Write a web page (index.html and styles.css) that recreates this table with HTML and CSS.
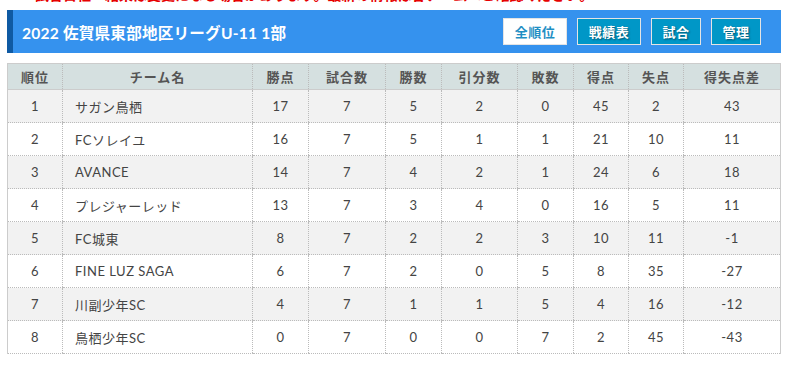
FILE: index.html
```html
<!DOCTYPE html>
<html lang="ja">
<head>
<meta charset="utf-8">
<title>2022 佐賀県東部地区リーグU-11 1部</title>
<link rel="stylesheet" href="styles.css">
</head>
<body>
<div class="topline">
  <span class="notice">※試合日程・結果は変更になる場合があります。最新の情報は各チームへご確認ください。</span>
  <span class="updated">最終更新日　2022年11月</span>
</div>
<div class="league-bar">
  <h2 class="league-title">2022 佐賀県東部地区リーグU-11 1部</h2>
  <nav class="league-nav">
    <a class="nav-btn active">全順位</a>
    <a class="nav-btn">戦績表</a>
    <a class="nav-btn">試合</a>
    <a class="nav-btn">管理</a>
  </nav>
</div>
<table class="standings">
  <colgroup>
    <col class="c-rank"><col class="c-team"><col class="c-pts"><col class="c-gp"><col class="c-w"><col class="c-d"><col class="c-l"><col class="c-gf"><col class="c-ga"><col class="c-gd">
  </colgroup>
  <thead>
    <tr><th>順位</th><th>チーム名</th><th>勝点</th><th>試合数</th><th>勝数</th><th>引分数</th><th>敗数</th><th>得点</th><th>失点</th><th>得失点差</th></tr>
  </thead>
  <tbody>
    <tr><td>1</td><td class="team">サガン鳥栖</td><td>17</td><td>7</td><td>5</td><td>2</td><td>0</td><td>45</td><td>2</td><td>43</td></tr>
    <tr><td>2</td><td class="team">FCソレイユ</td><td>16</td><td>7</td><td>5</td><td>1</td><td>1</td><td>21</td><td>10</td><td>11</td></tr>
    <tr><td>3</td><td class="team">AVANCE</td><td>14</td><td>7</td><td>4</td><td>2</td><td>1</td><td>24</td><td>6</td><td>18</td></tr>
    <tr><td>4</td><td class="team">プレジャーレッド</td><td>13</td><td>7</td><td>3</td><td>4</td><td>0</td><td>16</td><td>5</td><td>11</td></tr>
    <tr><td>5</td><td class="team">FC城東</td><td>8</td><td>7</td><td>2</td><td>2</td><td>3</td><td>10</td><td>11</td><td>-1</td></tr>
    <tr><td>6</td><td class="team">FINE LUZ SAGA</td><td>6</td><td>7</td><td>2</td><td>0</td><td>5</td><td>8</td><td>35</td><td>-27</td></tr>
    <tr><td>7</td><td class="team">川副少年SC</td><td>4</td><td>7</td><td>1</td><td>1</td><td>5</td><td>4</td><td>16</td><td>-12</td></tr>
    <tr><td>8</td><td class="team">鳥栖少年SC</td><td>0</td><td>7</td><td>0</td><td>0</td><td>7</td><td>2</td><td>45</td><td>-43</td></tr>
  </tbody>
</table>
</body>
</html>
```

FILE: styles.css
```css
* { box-sizing: border-box; }
html, body { margin: 0; padding: 0; background: #fff; }
body {
  font-family: "Lato", "Noto Sans CJK JP", sans-serif;
  color: #444;
  padding: 0 9px 0 7px;
  width: 790px;
}
.topline {
  height: 4px;
  margin-bottom: 6px;
  overflow: hidden;
  display: flex;
  align-items: flex-start;
  justify-content: space-between;
  font-size: 14px;
  line-height: 16px;
}
.topline .notice, .topline .updated {
  margin-top: -13px;
  white-space: nowrap;
}
.topline .notice { color: #e60000; font-weight: bold; padding-left: 14px; }
.topline .updated { color: #666; font-size: 12px; padding-right: 60px; }
.league-bar {
  height: 43px;
  background: #3592ee;
  border-left: 6px solid #0f5aa3;
  width: 774px;
  display: flex;
  align-items: center;
  justify-content: space-between;
  padding: 0 20px 0 9px;
}
.league-title {
  margin: 0;
  color: #fff;
  font-size: 15.6px;
  font-weight: bold;
  letter-spacing: 0.2px;
  white-space: nowrap;
}
.league-nav { display: flex; gap: 10px; }
.nav-btn {
  display: flex;
  align-items: center;
  justify-content: center;
  height: 27px;
  padding: 0;
  background: #0097c7;
  border: 1px solid #e4e4e4;
  color: #fff;
  font-size: 13px;
  font-weight: bold;
  text-shadow: 1px 1px 2px rgba(0,0,0,0.45);
  letter-spacing: 0.5px;
  white-space: nowrap;
}
.nav-btn:nth-child(1) { width: 64px; }
.nav-btn:nth-child(2) { width: 64px; }
.nav-btn:nth-child(3) { width: 50px; }
.nav-btn:nth-child(4) { width: 50px; }
.nav-btn.active {
  background: #fff;
  color: #1f8fc4;
  text-shadow: none;
}
.standings {
  margin-top: 10px;
  width: 773px;
  border-collapse: collapse;
  table-layout: fixed;
  font-size: 13px;
  border-left: 1px solid #ccc;
  border-right: 1px solid #ccc;
  border-top: 1px solid #ccc;
}
.c-rank { width: 55px; }
.c-team { width: 190px; }
.c-pts { width: 56px; }
.c-gp { width: 77px; }
.c-w { width: 56px; }
.c-d { width: 76px; }
.c-l { width: 56px; }
.c-gf { width: 55px; }
.c-ga { width: 55px; }
.c-gd { width: 97px; }
.standings th {
  background: #d5e0e0;
  color: #555;
  font-weight: bold;
  height: 26px;
  padding: 0;
  letter-spacing: 1px;
  border-left: 1px dotted #bbb;
  border-bottom: 1px solid #ccc;
}
.standings td {
  height: 33px;
  padding: 0;
  text-align: center;
  color: #444;
  border-left: 1px dotted #bbb;
  border-bottom: 1px dotted #bbb;
  letter-spacing: 0.5px;
}
.standings th:first-child, .standings td:first-child { border-left: none; }
.standings td.team { text-align: left; padding-left: 12px; }
.standings tbody tr:nth-child(odd) td { background: #f2f2f2; }
```
